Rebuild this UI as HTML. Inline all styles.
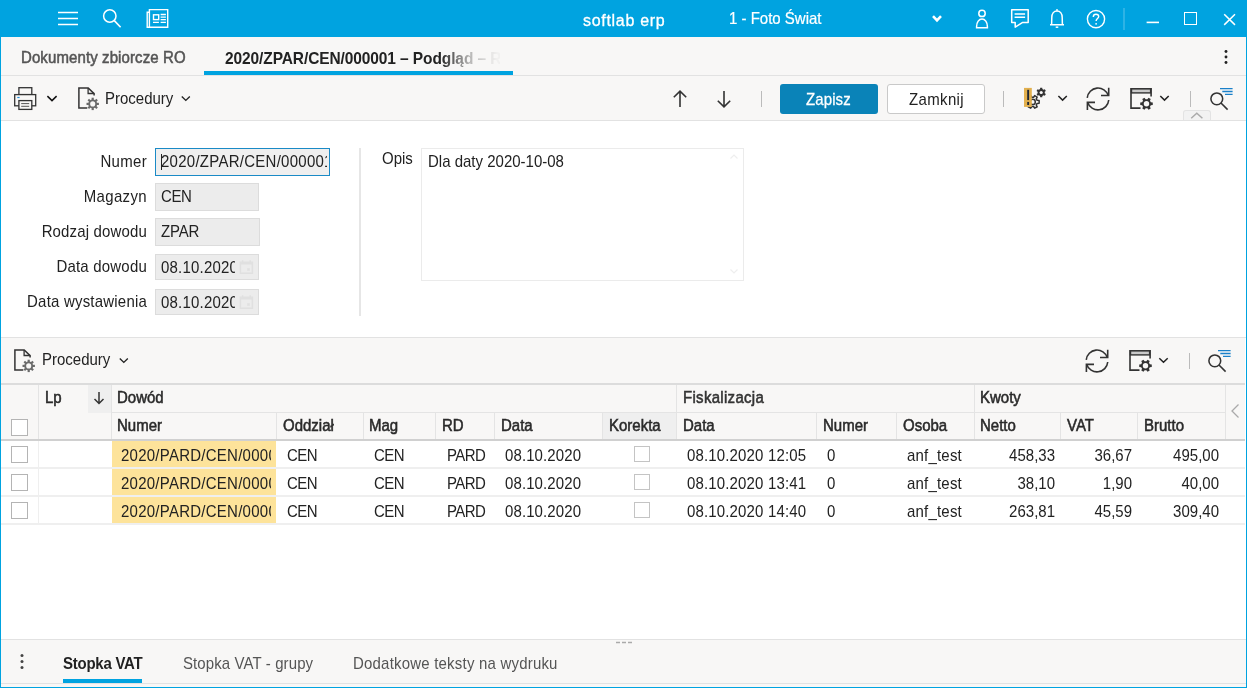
<!DOCTYPE html><html><head><meta charset="utf-8"><style>
html,body{margin:0;padding:0;background:#fff;width:1254px;height:688px;overflow:hidden}
body{position:relative;font-family:"Liberation Sans",sans-serif}
.t{position:absolute;white-space:nowrap;line-height:normal;transform:scaleY(1.08);transform-origin:0 14px}
.m{-webkit-text-stroke:0.5px currentColor}
svg{overflow:visible}
</style></head><body><div id="root" style="position:absolute;left:0;top:0;width:1254px;height:688px;background:#fff;will-change:transform"><div style="position:absolute;left:0px;top:0px;width:1247px;height:37px;background:#00a3e0"></div>
<div style="position:absolute;left:0px;top:37px;width:1247px;height:84px;background:#f8f7f6"></div>
<div style="position:absolute;left:0px;top:75px;width:1247px;height:1px;background:#e2e2e2"></div>
<div style="position:absolute;left:0px;top:120px;width:1247px;height:1px;background:#e2e2e2"></div>
<div style="position:absolute;left:0px;top:121px;width:1247px;height:216px;background:#fff"></div>
<div style="position:absolute;left:0px;top:337px;width:1247px;height:1px;background:#e2e2e2"></div>
<div style="position:absolute;left:0px;top:338px;width:1245px;height:45px;background:#f8f7f6"></div>
<div style="position:absolute;left:0px;top:383px;width:1245px;height:2px;background:#dcdcdc"></div>
<div style="position:absolute;left:0px;top:385px;width:1225px;height:54px;background:#f8f7f6"></div>
<div style="position:absolute;left:1225px;top:385px;width:20px;height:54px;background:#f8f7f6"></div>
<div style="position:absolute;left:0px;top:439px;width:1245px;height:2px;background:#d0d0d0"></div>
<div style="position:absolute;left:0px;top:441px;width:1247px;height:198px;background:#fff"></div>
<div style="position:absolute;left:0px;top:639px;width:1247px;height:1px;background:#e2e2e2"></div>
<div style="position:absolute;left:0px;top:640px;width:1247px;height:47px;background:#f8f7f6"></div>
<div style="position:absolute;left:0px;top:683px;width:1247px;height:1px;background:#e2e2e2"></div>
<svg style="position:absolute;left:58px;top:11px;" width="20" height="15" viewBox="0 0 20 15"><path d="M0 1.5H20M0 7.5H20M0 13.5H20" stroke="#fff" stroke-width="1.6"/></svg>
<svg style="position:absolute;left:100px;top:6px;" width="24" height="24" viewBox="0 0 24 24"><circle cx="9.8" cy="10" r="6.2" fill="none" stroke="#fff" stroke-width="1.5"/><path d="M14.3 14.6L20.6 21.3" stroke="#fff" stroke-width="1.6"/></svg>
<svg style="position:absolute;left:146px;top:8px;" width="24" height="21" viewBox="0 0 24 21"><path d="M3.4 4.2H1.2V19.3H21.7V1.6H3.4V19.3" fill="none" stroke="#fff" stroke-width="1.4"/><rect x="7.5" y="6.8" width="5.2" height="4.8" fill="none" stroke="#fff" stroke-width="1.4"/><path d="M14.6 6.5H19.9M14.6 9.1H19.9M14.6 11.6H19.9M7 14.4H12.9M14.6 14.4H19.9" stroke="#fff" stroke-width="1.3"/></svg>
<div class="t" style="left:583px;top:12px;font-size:16px;font-weight:400;color:#fff;letter-spacing:0.7px;-webkit-text-stroke:0.3px #fff">softlab erp</div>
<div class="t" style="left:729px;top:10px;font-size:15px;font-weight:400;color:#fff;-webkit-text-stroke:0.2px #fff">1 - Foto Świat</div>
<svg style="position:absolute;left:930px;top:12px;" width="14" height="12" viewBox="0 0 14 12"><path d="M3 4.2L7 8.3L11 4.2" fill="none" stroke="#fff" stroke-width="2.6"/></svg>
<svg style="position:absolute;left:972px;top:8px;" width="20" height="22" viewBox="0 0 20 22"><circle cx="10" cy="5.4" r="3.2" fill="none" stroke="#fff" stroke-width="1.5"/><path d="M4.6 19.7V18.5C4.6 14.2 7 11 10 11C13 11 15.4 14.2 15.4 18.5V19.7Z" fill="none" stroke="#fff" stroke-width="1.5"/></svg>
<svg style="position:absolute;left:1008px;top:7px;" width="24" height="22" viewBox="0 0 24 22"><path d="M3.7 2.8H20.2V15.6H14.3L7.2 20.2V15.6H3.7Z" fill="none" stroke="#fff" stroke-width="1.5" stroke-linejoin="round"/><path d="M6.6 7H17.1M6.6 10.2H17.1" stroke="#fff" stroke-width="1.5"/></svg>
<svg style="position:absolute;left:1047px;top:7px;" width="22" height="23" viewBox="0 0 22 23"><path d="M4.6 17.8L4.8 10.6C4.8 6.7 7 4 10 4C13 4 15.2 6.7 15.2 10.6L15.4 17.8M3 17.8H17" fill="none" stroke="#fff" stroke-width="1.5"/><circle cx="10" cy="2.9" r="0.9" fill="#fff"/><path d="M8.7 20.2H11.3" stroke="#fff" stroke-width="1.5"/></svg>
<svg style="position:absolute;left:1084px;top:7px;" width="24" height="24" viewBox="0 0 24 24"><circle cx="12" cy="12.1" r="8.6" fill="none" stroke="#fff" stroke-width="1.4"/><path d="M9.3 9.9C9.3 8.2 10.5 7.2 12 7.2C13.5 7.2 14.7 8.2 14.7 9.6C14.7 11.4 12.1 11.9 12.1 14.1" fill="none" stroke="#fff" stroke-width="1.4"/><circle cx="12.1" cy="16.8" r="0.9" fill="#fff"/></svg>
<div style="position:absolute;left:1123px;top:8px;width:2px;height:22px;background:rgba(255,255,255,0.18)"></div>
<svg style="position:absolute;left:1146px;top:20px;" width="14" height="5" viewBox="0 0 14 5"><path d="M0.6 2.4H13" stroke="#fff" stroke-width="1.6"/></svg>
<div style="position:absolute;left:1184px;top:12px;width:13px;height:13px;box-sizing:border-box;border:1.6px solid #fff"></div>
<svg style="position:absolute;left:1222px;top:12px;" width="15" height="15" viewBox="0 0 15 15"><path d="M2.2 2.3L13 12.9M13 2.3L2.2 12.9" stroke="#fff" stroke-width="1.5"/></svg>
<div class="t" style="left:21px;top:49px;font-size:15px;font-weight:400;color:#555;letter-spacing:0.1px"><span class="m">Dokumenty zbiorcze RO</span></div>
<div class="t" style="left:225px;top:50px;font-size:15.5px;font-weight:700;letter-spacing:-0.1px;color:#222;width:275px;overflow:hidden;-webkit-mask-image:linear-gradient(90deg,#000 0,#000 215px,rgba(0,0,0,0.3) 245px,rgba(0,0,0,0.03) 272px)">2020/ZPAR/CEN/000001 – Podgląd – Rozliczenie</div>
<div style="position:absolute;left:204px;top:71px;width:309px;height:4px;background:#00a3e0"></div>
<svg style="position:absolute;left:1222px;top:48px;" width="8" height="20" viewBox="0 0 8 20"><circle cx="4" cy="3.5" r="1.45" fill="#222"/><circle cx="4" cy="9" r="1.45" fill="#222"/><circle cx="4" cy="14.5" r="1.45" fill="#222"/></svg>
<svg style="position:absolute;left:12px;top:85px;" width="26" height="27" viewBox="0 0 26 27"><rect x="6.9" y="2.7" width="12.9" height="6.9" fill="none" stroke="#333" stroke-width="1.3"/><rect x="2.7" y="9.6" width="21" height="11.2" fill="#f8f7f6" stroke="#333" stroke-width="1.3"/><rect x="6.9" y="15.6" width="12.9" height="8.8" fill="#f8f7f6" stroke="#333" stroke-width="1.3"/><path d="M9.2 18.6H17.2M9.2 21.3H17.2" stroke="#555" stroke-width="1"/><path d="M5.3 12.5H7.6" stroke="#1e8ad6" stroke-width="1.2"/></svg>
<svg style="position:absolute;left:44px;top:92px;" width="16" height="12" viewBox="0 0 16 12"><path d="M3.4 4.1L8 8.6L12.6 4.1" fill="none" stroke="#111" stroke-width="1.5"/></svg>
<svg style="position:absolute;left:77px;top:85px;" width="24" height="26" viewBox="0 0 24 26"><path d="M10.3 23H1.9V2.9H11.2L17.1 8.6V10.6" fill="none" stroke="#333" stroke-width="1.5"/><path d="M11.1 2.9V8.5H17.1" fill="none" stroke="#333" stroke-width="1.3"/><g transform="translate(15.7 18.9)"><circle r="3.5" fill="none" stroke="#6a6a6a" stroke-width="1.9"/><rect x="-1.1" y="-6.2" width="2.2" height="2.4" fill="#6a6a6a" transform="rotate(0)"/><rect x="-1.1" y="-6.2" width="2.2" height="2.4" fill="#6a6a6a" transform="rotate(45)"/><rect x="-1.1" y="-6.2" width="2.2" height="2.4" fill="#6a6a6a" transform="rotate(90)"/><rect x="-1.1" y="-6.2" width="2.2" height="2.4" fill="#6a6a6a" transform="rotate(135)"/><rect x="-1.1" y="-6.2" width="2.2" height="2.4" fill="#6a6a6a" transform="rotate(180)"/><rect x="-1.1" y="-6.2" width="2.2" height="2.4" fill="#6a6a6a" transform="rotate(225)"/><rect x="-1.1" y="-6.2" width="2.2" height="2.4" fill="#6a6a6a" transform="rotate(270)"/><rect x="-1.1" y="-6.2" width="2.2" height="2.4" fill="#6a6a6a" transform="rotate(315)"/></g></svg>
<div class="t" style="left:105px;top:90px;font-size:15px;font-weight:400;color:#222;">Procedury</div>
<svg style="position:absolute;left:178px;top:92px;" width="14" height="12" viewBox="0 0 14 12"><path d="M3.8 4.6L7.8 8.4L11.8 4.6" fill="none" stroke="#222" stroke-width="1.4"/></svg>
<svg style="position:absolute;left:670px;top:88px;" width="20" height="22" viewBox="0 0 20 22"><path d="M10 3.2V19M3.8 9.3L10 3.1L16.2 9.3" fill="none" stroke="#333" stroke-width="1.6"/></svg>
<svg style="position:absolute;left:714px;top:88px;" width="20" height="22" viewBox="0 0 20 22"><path d="M10 3V18.8M3.8 12.7L10 18.9L16.2 12.7" fill="none" stroke="#333" stroke-width="1.6"/></svg>
<div style="position:absolute;left:761px;top:91px;width:1px;height:16px;background:#bbb"></div>
<div style="position:absolute;left:780px;top:84px;width:98px;height:30px;background:#0a83b8;border-radius:3px"></div>
<div class="t" style="left:806px;top:91px;font-size:15px;font-weight:400;color:#fff;-webkit-text-stroke:0.25px #fff;letter-spacing:0.1px">Zapisz</div>
<div style="position:absolute;left:887px;top:84px;width:98px;height:30px;box-sizing:border-box;background:#fff;border:1px solid #c9c9c9;border-radius:3px"></div>
<div class="t" style="left:909px;top:91px;font-size:15px;font-weight:400;color:#222;letter-spacing:0.35px">Zamknij</div>
<div style="position:absolute;left:1003px;top:91px;width:1px;height:16px;background:#bbb"></div>
<svg style="position:absolute;left:1022px;top:86px;" width="28" height="26" viewBox="0 0 28 26"><path d="M11.58 11.28 L12.67 9.60 L15.17 11.04 L14.26 12.83 L15.14 14.35 L17.14 14.46 L17.14 17.34 L15.14 17.45 L14.26 18.97 L15.17 20.76 L12.67 22.20 L11.58 20.52 L9.82 20.52 L8.73 22.20 L6.23 20.76 L7.14 18.97 L6.26 17.45 L4.26 17.34 L4.26 14.46 L6.26 14.35 L7.14 12.83 L6.23 11.04 L8.73 9.60 L9.82 11.28Z" fill="#f8f7f6" stroke="#333" stroke-width="1.5" stroke-linejoin="round"/><circle cx="10.7" cy="15.9" r="2.6" fill="none" stroke="#333" stroke-width="1.5"/><rect x="2" y="1.9" width="7.8" height="19" fill="#e2b04e"/><rect x="5.2" y="3.8" width="1.9" height="10.3" fill="#1e2633"/><rect x="5.2" y="15.9" width="1.9" height="3.1" fill="#1e2633"/><path d="M18.02 3.10 L18.18 1.71 L20.22 1.71 L20.38 3.10 L21.55 3.77 L22.84 3.22 L23.86 4.99 L22.74 5.83 L22.74 7.17 L23.86 8.01 L22.84 9.78 L21.55 9.23 L20.38 9.90 L20.22 11.29 L18.18 11.29 L18.02 9.90 L16.85 9.23 L15.56 9.78 L14.54 8.01 L15.66 7.17 L15.66 5.83 L14.54 4.99 L15.56 3.22 L16.85 3.77Z" fill="#333"/><circle cx="19.2" cy="6.5" r="1.6" fill="#f8f7f6"/></svg>
<svg style="position:absolute;left:1054px;top:92px;" width="16" height="12" viewBox="0 0 16 12"><path d="M4.4 4L8.6 8.1L12.8 4" fill="none" stroke="#222" stroke-width="1.5"/></svg>
<svg style="position:absolute;left:1085px;top:86px;" width="26" height="26" viewBox="0 0 26 26"><path d="M2.26 11.8A10.8 10.8 0 0 1 23.3 9.6M23.74 14A10.8 10.8 0 0 1 2.7 16.4" fill="none" stroke="#333" stroke-width="1.6"/><path d="M23.7 1.8V9.5H16M2.4 24V16.4H10" fill="none" stroke="#333" stroke-width="1.6"/></svg>
<svg style="position:absolute;left:1130px;top:86px;" width="28" height="26" viewBox="0 0 28 26"><path d="M10.5 22.1H1V2.9H21.1V10.6" fill="none" stroke="#333" stroke-width="1.6"/><rect x="1.5" y="2.9" width="19.1" height="4" fill="#c9c9c9" stroke="#333" stroke-width="1.4"/><path d="M17.36 13.28 L18.54 11.73 L20.73 13.00 L19.98 14.79 L20.84 16.29 L22.77 16.53 L22.77 19.07 L20.84 19.31 L19.98 20.81 L20.73 22.60 L18.54 23.87 L17.36 22.32 L15.64 22.32 L14.46 23.87 L12.27 22.60 L13.02 20.81 L12.16 19.31 L10.23 19.07 L10.23 16.53 L12.16 16.29 L13.02 14.79 L12.27 13.00 L14.46 11.73 L15.64 13.28Z" fill="#333"/><circle cx="16.5" cy="17.8" r="2.7" fill="#f8f7f6"/></svg>
<svg style="position:absolute;left:1156px;top:92px;" width="16" height="12" viewBox="0 0 16 12"><path d="M4.3 4L8.5 8.1L12.7 4" fill="none" stroke="#222" stroke-width="1.5"/></svg>
<div style="position:absolute;left:1190px;top:91px;width:1px;height:16px;background:#bbb"></div>
<svg style="position:absolute;left:1208px;top:86px;" width="26" height="26" viewBox="0 0 26 26"><circle cx="8.8" cy="12.8" r="5.9" fill="none" stroke="#333" stroke-width="1.55"/><path d="M13 17L19.6 23.6" stroke="#333" stroke-width="1.6"/><path d="M12 2.7H24.6M14.3 5.5H24.6M17 8.3H24.6" stroke="#1a80c9" stroke-width="1.3"/></svg>
<div style="position:absolute;left:1183px;top:110px;width:28px;height:10px;background:#f2f2f2;border:1px solid #e3e3e3;border-bottom:none;border-radius:3px 3px 0 0;box-sizing:border-box"></div>
<svg style="position:absolute;left:1188px;top:110px;" width="17" height="10" viewBox="0 0 17 10"><path d="M3.2 8.2L8.8 3.3L14.4 8.2" fill="none" stroke="#aaa" stroke-width="1.5"/></svg>
<div class="t" style="right:1107px;top:153px;font-size:15px;letter-spacing:0.3px;color:#222">Numer</div>
<div class="t" style="right:1107px;top:188px;font-size:15px;letter-spacing:0.35px;color:#222">Magazyn</div>
<div class="t" style="right:1107px;top:223px;font-size:15px;letter-spacing:0.15px;color:#222">Rodzaj dowodu</div>
<div class="t" style="right:1107px;top:258px;font-size:15px;letter-spacing:0.2px;color:#222">Data dowodu</div>
<div class="t" style="right:1107px;top:293px;font-size:15px;letter-spacing:0.2px;color:#222">Data wystawienia</div>
<div style="position:absolute;left:155px;top:148px;width:175px;height:28px;box-sizing:border-box;background:#efefef;border:1.5px solid #1a8ac6"></div>
<div class="t" style="left:161px;top:153px;width:166px;overflow:hidden;font-size:15px;letter-spacing:0.26px;color:#222">2020/ZPAR/CEN/000001</div>
<div style="position:absolute;left:161px;top:154px;width:1px;height:16px;background:#222"></div>
<div style="position:absolute;left:155px;top:183px;width:104px;height:28px;box-sizing:border-box;background:#ececec;border:1px solid #dcdcdc"></div>
<div class="t" style="left:161px;top:188px;font-size:15px;font-weight:400;color:#222;letter-spacing:-0.4px">CEN</div>
<div style="position:absolute;left:155px;top:218px;width:105px;height:28px;box-sizing:border-box;background:#ececec;border:1px solid #dcdcdc"></div>
<div class="t" style="left:161px;top:223px;font-size:15px;font-weight:400;color:#222;letter-spacing:-0.2px">ZPAR</div>
<div style="position:absolute;left:155px;top:254px;width:104px;height:26px;box-sizing:border-box;background:#ececec;border:1px solid #dcdcdc"></div>
<div class="t" style="left:161px;top:259px;width:74px;overflow:hidden;font-size:15px;letter-spacing:0.2px;color:#222">08.10.2020</div>
<div style="position:absolute;left:235px;top:255px;width:23px;height:24px;background:#ececec"></div>
<svg style="position:absolute;left:239px;top:259px;" width="15" height="15" viewBox="0 0 15 15"><rect x="1.4" y="3.2" width="12" height="11" fill="none" stroke="#e0e0e0" stroke-width="1.5"/><path d="M1.4 4.8H13.4M3.6 1.2V3.2M11.2 1.2V3.2" stroke="#e0e0e0" stroke-width="1.5"/><rect x="8.2" y="9.2" width="2.6" height="2.6" fill="#e0e0e0"/></svg>
<div style="position:absolute;left:155px;top:289px;width:104px;height:26px;box-sizing:border-box;background:#ececec;border:1px solid #dcdcdc"></div>
<div class="t" style="left:161px;top:294px;width:74px;overflow:hidden;font-size:15px;letter-spacing:0.2px;color:#222">08.10.2020</div>
<div style="position:absolute;left:235px;top:290px;width:23px;height:24px;background:#ececec"></div>
<svg style="position:absolute;left:239px;top:294px;" width="15" height="15" viewBox="0 0 15 15"><rect x="1.4" y="3.2" width="12" height="11" fill="none" stroke="#e0e0e0" stroke-width="1.5"/><path d="M1.4 4.8H13.4M3.6 1.2V3.2M11.2 1.2V3.2" stroke="#e0e0e0" stroke-width="1.5"/><rect x="8.2" y="9.2" width="2.6" height="2.6" fill="#e0e0e0"/></svg>
<div style="position:absolute;left:359px;top:148px;width:2px;height:168px;background:#e6e6e6"></div>
<div class="t" style="left:382px;top:150px;font-size:15px;font-weight:400;color:#222;">Opis</div>
<div style="position:absolute;left:421px;top:148px;width:323px;height:133px;box-sizing:border-box;background:#fff;border:1px solid #ebebeb"></div>
<div class="t" style="left:428px;top:153px;font-size:15px;font-weight:400;color:#222;">Dla daty 2020-10-08</div>
<svg style="position:absolute;left:728px;top:152px;" width="12" height="10" viewBox="0 0 12 10"><path d="M2.5 6.5L6 3L9.5 6.5" fill="none" stroke="#eee" stroke-width="1.2"/></svg>
<svg style="position:absolute;left:728px;top:266px;" width="12" height="10" viewBox="0 0 12 10"><path d="M2.5 3.5L6 7L9.5 3.5" fill="none" stroke="#eee" stroke-width="1.2"/></svg>
<svg style="position:absolute;left:13px;top:347px;" width="24" height="26" viewBox="0 0 24 26"><path d="M10.3 23H1.9V2.9H11.2L17.1 8.6V10.6" fill="none" stroke="#333" stroke-width="1.5"/><path d="M11.1 2.9V8.5H17.1" fill="none" stroke="#333" stroke-width="1.3"/><g transform="translate(15.7 18.9)"><circle r="3.5" fill="none" stroke="#6a6a6a" stroke-width="1.9"/><rect x="-1.1" y="-6.2" width="2.2" height="2.4" fill="#6a6a6a" transform="rotate(0)"/><rect x="-1.1" y="-6.2" width="2.2" height="2.4" fill="#6a6a6a" transform="rotate(45)"/><rect x="-1.1" y="-6.2" width="2.2" height="2.4" fill="#6a6a6a" transform="rotate(90)"/><rect x="-1.1" y="-6.2" width="2.2" height="2.4" fill="#6a6a6a" transform="rotate(135)"/><rect x="-1.1" y="-6.2" width="2.2" height="2.4" fill="#6a6a6a" transform="rotate(180)"/><rect x="-1.1" y="-6.2" width="2.2" height="2.4" fill="#6a6a6a" transform="rotate(225)"/><rect x="-1.1" y="-6.2" width="2.2" height="2.4" fill="#6a6a6a" transform="rotate(270)"/><rect x="-1.1" y="-6.2" width="2.2" height="2.4" fill="#6a6a6a" transform="rotate(315)"/></g></svg>
<div class="t" style="left:42px;top:351px;font-size:15px;font-weight:400;color:#222;">Procedury</div>
<svg style="position:absolute;left:116px;top:354px;" width="14" height="12" viewBox="0 0 14 12"><path d="M3.8 4.6L7.8 8.4L11.8 4.6" fill="none" stroke="#222" stroke-width="1.4"/></svg>
<svg style="position:absolute;left:1084px;top:348px;" width="26" height="26" viewBox="0 0 26 26"><path d="M2.26 11.8A10.8 10.8 0 0 1 23.3 9.6M23.74 14A10.8 10.8 0 0 1 2.7 16.4" fill="none" stroke="#333" stroke-width="1.6"/><path d="M23.7 1.8V9.5H16M2.4 24V16.4H10" fill="none" stroke="#333" stroke-width="1.6"/></svg>
<svg style="position:absolute;left:1129px;top:348px;" width="28" height="26" viewBox="0 0 28 26"><path d="M10.5 22.1H1V2.9H21.1V10.6" fill="none" stroke="#333" stroke-width="1.6"/><rect x="1.5" y="2.9" width="19.1" height="4" fill="#c9c9c9" stroke="#333" stroke-width="1.4"/><path d="M17.36 13.28 L18.54 11.73 L20.73 13.00 L19.98 14.79 L20.84 16.29 L22.77 16.53 L22.77 19.07 L20.84 19.31 L19.98 20.81 L20.73 22.60 L18.54 23.87 L17.36 22.32 L15.64 22.32 L14.46 23.87 L12.27 22.60 L13.02 20.81 L12.16 19.31 L10.23 19.07 L10.23 16.53 L12.16 16.29 L13.02 14.79 L12.27 13.00 L14.46 11.73 L15.64 13.28Z" fill="#333"/><circle cx="16.5" cy="17.8" r="2.7" fill="#f8f7f6"/></svg>
<svg style="position:absolute;left:1155px;top:354px;" width="16" height="12" viewBox="0 0 16 12"><path d="M4.3 4.2L8.5 8.3L12.7 4.2" fill="none" stroke="#222" stroke-width="1.5"/></svg>
<div style="position:absolute;left:1189px;top:353px;width:1px;height:16px;background:#bbb"></div>
<svg style="position:absolute;left:1206px;top:348px;" width="26" height="26" viewBox="0 0 26 26"><circle cx="8.8" cy="12.8" r="5.9" fill="none" stroke="#333" stroke-width="1.55"/><path d="M13 17L19.6 23.6" stroke="#333" stroke-width="1.6"/><path d="M12 2.7H24.6M14.3 5.5H24.6M17 8.3H24.6" stroke="#1a80c9" stroke-width="1.3"/></svg>
<div style="position:absolute;left:88px;top:385px;width:23px;height:28px;background:#efefef"></div>
<div style="position:absolute;left:602px;top:413px;width:74px;height:26px;background:#efefef"></div>
<div style="position:absolute;left:38px;top:385px;width:1px;height:54px;background:#e4e4e4"></div>
<div style="position:absolute;left:111px;top:385px;width:1px;height:54px;background:#e4e4e4"></div>
<div style="position:absolute;left:676px;top:385px;width:1px;height:54px;background:#e4e4e4"></div>
<div style="position:absolute;left:974px;top:385px;width:1px;height:54px;background:#e4e4e4"></div>
<div style="position:absolute;left:276px;top:413px;width:1px;height:26px;background:#e4e4e4"></div>
<div style="position:absolute;left:363px;top:413px;width:1px;height:26px;background:#e4e4e4"></div>
<div style="position:absolute;left:435px;top:413px;width:1px;height:26px;background:#e4e4e4"></div>
<div style="position:absolute;left:494px;top:413px;width:1px;height:26px;background:#e4e4e4"></div>
<div style="position:absolute;left:602px;top:413px;width:1px;height:26px;background:#e4e4e4"></div>
<div style="position:absolute;left:816px;top:413px;width:1px;height:26px;background:#e4e4e4"></div>
<div style="position:absolute;left:896px;top:413px;width:1px;height:26px;background:#e4e4e4"></div>
<div style="position:absolute;left:1060px;top:413px;width:1px;height:26px;background:#e4e4e4"></div>
<div style="position:absolute;left:1137px;top:413px;width:1px;height:26px;background:#e4e4e4"></div>
<div style="position:absolute;left:1225px;top:385px;width:1px;height:54px;background:#e4e4e4"></div>
<div style="position:absolute;left:111px;top:412px;width:1114px;height:1px;background:#e4e4e4"></div>
<div class="t" style="left:45px;top:389px;font-size:15px;font-weight:400;color:#2a2a2a;"><span class="m">Lp</span></div>
<svg style="position:absolute;left:90px;top:389px;" width="18" height="18" viewBox="0 0 18 18"><path d="M9 3V14.5M4.5 10L9 14.5L13.5 10" fill="none" stroke="#333" stroke-width="1.5"/></svg>
<div class="t" style="left:117px;top:389px;font-size:15px;font-weight:400;color:#2a2a2a;"><span class="m">Dowód</span></div>
<div class="t" style="left:683px;top:389px;font-size:15px;font-weight:400;color:#333;letter-spacing:0.3px"><span class="m">Fiskalizacja</span></div>
<div class="t" style="left:980px;top:389px;font-size:15px;font-weight:400;color:#2a2a2a;"><span class="m">Kwoty</span></div>
<div class="t" style="left:117px;top:417px;font-size:15px;font-weight:400;color:#2a2a2a;"><span class="m">Numer</span></div>
<div class="t" style="left:283px;top:417px;font-size:15px;font-weight:400;color:#2a2a2a;"><span class="m">Oddział</span></div>
<div class="t" style="left:369px;top:417px;font-size:15px;font-weight:400;color:#2a2a2a;"><span class="m">Mag</span></div>
<div class="t" style="left:442px;top:417px;font-size:15px;font-weight:400;color:#2a2a2a;"><span class="m">RD</span></div>
<div class="t" style="left:501px;top:417px;font-size:15px;font-weight:400;color:#2a2a2a;"><span class="m">Data</span></div>
<div class="t" style="left:609px;top:417px;font-size:15px;font-weight:400;color:#2a2a2a;"><span class="m">Korekta</span></div>
<div class="t" style="left:683px;top:417px;font-size:15px;font-weight:400;color:#2a2a2a;"><span class="m">Data</span></div>
<div class="t" style="left:823px;top:417px;font-size:15px;font-weight:400;color:#2a2a2a;"><span class="m">Numer</span></div>
<div class="t" style="left:903px;top:417px;font-size:15px;font-weight:400;color:#2a2a2a;"><span class="m">Osoba</span></div>
<div class="t" style="left:980px;top:417px;font-size:15px;font-weight:400;color:#2a2a2a;"><span class="m">Netto</span></div>
<div class="t" style="left:1067px;top:417px;font-size:15px;font-weight:400;color:#2a2a2a;"><span class="m">VAT</span></div>
<div class="t" style="left:1144px;top:417px;font-size:15px;font-weight:400;color:#2a2a2a;"><span class="m">Brutto</span></div>
<svg style="position:absolute;left:1229px;top:402px;" width="12" height="18" viewBox="0 0 12 18"><path d="M9.5 2.5L3 9L9.5 15.5" fill="none" stroke="#aaa" stroke-width="1.3"/></svg>
<div style="position:absolute;left:11px;top:419px;width:17px;height:17px;box-sizing:border-box;background:#fff;border:1.5px solid #b4b4b4"></div>
<div style="position:absolute;left:112px;top:441px;width:164px;height:26px;background:#fde39a"></div>
<div style="position:absolute;left:0px;top:467px;width:1245px;height:2px;background:#efefef"></div>
<div style="position:absolute;left:11px;top:446px;width:17px;height:17px;box-sizing:border-box;background:#fff;border:1.5px solid #b4b4b4"></div>
<div class="t" style="left:121px;top:447px;width:150px;overflow:hidden;font-size:15px;letter-spacing:0.25px;color:#222">2020/PARD/CEN/000001</div>
<div class="t" style="left:287px;top:447px;font-size:15px;font-weight:400;color:#222;letter-spacing:-0.5px">CEN</div>
<div class="t" style="left:374px;top:447px;font-size:15px;font-weight:400;color:#222;letter-spacing:-0.5px">CEN</div>
<div class="t" style="left:447px;top:447px;font-size:15px;font-weight:400;color:#222;letter-spacing:-0.6px">PARD</div>
<div class="t" style="left:505px;top:447px;font-size:15px;font-weight:400;color:#222;letter-spacing:0.1px">08.10.2020</div>
<div style="position:absolute;left:634px;top:446px;width:16px;height:16px;box-sizing:border-box;background:#fff;border:1.5px solid #c4c4c4"></div>
<div class="t" style="left:687px;top:447px;font-size:15px;font-weight:400;color:#222;letter-spacing:0.15px">08.10.2020 12:05</div>
<div class="t" style="left:827px;top:447px;font-size:15px;font-weight:400;color:#222;">0</div>
<div class="t" style="left:907px;top:447px;font-size:15px;font-weight:400;color:#222;letter-spacing:0.2px">anf_test</div>
<div class="t" style="right:199px;top:447px;font-size:15px;color:#222">458,33</div>
<div class="t" style="right:122px;top:447px;font-size:15px;color:#222">36,67</div>
<div class="t" style="right:35px;top:447px;font-size:15px;color:#222">495,00</div>
<div style="position:absolute;left:112px;top:469px;width:164px;height:26px;background:#fde39a"></div>
<div style="position:absolute;left:0px;top:495px;width:1245px;height:2px;background:#efefef"></div>
<div style="position:absolute;left:11px;top:474px;width:17px;height:17px;box-sizing:border-box;background:#fff;border:1.5px solid #b4b4b4"></div>
<div class="t" style="left:121px;top:475px;width:150px;overflow:hidden;font-size:15px;letter-spacing:0.25px;color:#222">2020/PARD/CEN/000001</div>
<div class="t" style="left:287px;top:475px;font-size:15px;font-weight:400;color:#222;letter-spacing:-0.5px">CEN</div>
<div class="t" style="left:374px;top:475px;font-size:15px;font-weight:400;color:#222;letter-spacing:-0.5px">CEN</div>
<div class="t" style="left:447px;top:475px;font-size:15px;font-weight:400;color:#222;letter-spacing:-0.6px">PARD</div>
<div class="t" style="left:505px;top:475px;font-size:15px;font-weight:400;color:#222;letter-spacing:0.1px">08.10.2020</div>
<div style="position:absolute;left:634px;top:474px;width:16px;height:16px;box-sizing:border-box;background:#fff;border:1.5px solid #c4c4c4"></div>
<div class="t" style="left:687px;top:475px;font-size:15px;font-weight:400;color:#222;letter-spacing:0.15px">08.10.2020 13:41</div>
<div class="t" style="left:827px;top:475px;font-size:15px;font-weight:400;color:#222;">0</div>
<div class="t" style="left:907px;top:475px;font-size:15px;font-weight:400;color:#222;letter-spacing:0.2px">anf_test</div>
<div class="t" style="right:199px;top:475px;font-size:15px;color:#222">38,10</div>
<div class="t" style="right:122px;top:475px;font-size:15px;color:#222">1,90</div>
<div class="t" style="right:35px;top:475px;font-size:15px;color:#222">40,00</div>
<div style="position:absolute;left:112px;top:497px;width:164px;height:26px;background:#fde39a"></div>
<div style="position:absolute;left:0px;top:523px;width:1245px;height:2px;background:#efefef"></div>
<div style="position:absolute;left:11px;top:502px;width:17px;height:17px;box-sizing:border-box;background:#fff;border:1.5px solid #b4b4b4"></div>
<div class="t" style="left:121px;top:503px;width:150px;overflow:hidden;font-size:15px;letter-spacing:0.25px;color:#222">2020/PARD/CEN/000001</div>
<div class="t" style="left:287px;top:503px;font-size:15px;font-weight:400;color:#222;letter-spacing:-0.5px">CEN</div>
<div class="t" style="left:374px;top:503px;font-size:15px;font-weight:400;color:#222;letter-spacing:-0.5px">CEN</div>
<div class="t" style="left:447px;top:503px;font-size:15px;font-weight:400;color:#222;letter-spacing:-0.6px">PARD</div>
<div class="t" style="left:505px;top:503px;font-size:15px;font-weight:400;color:#222;letter-spacing:0.1px">08.10.2020</div>
<div style="position:absolute;left:634px;top:502px;width:16px;height:16px;box-sizing:border-box;background:#fff;border:1.5px solid #c4c4c4"></div>
<div class="t" style="left:687px;top:503px;font-size:15px;font-weight:400;color:#222;letter-spacing:0.15px">08.10.2020 14:40</div>
<div class="t" style="left:827px;top:503px;font-size:15px;font-weight:400;color:#222;">0</div>
<div class="t" style="left:907px;top:503px;font-size:15px;font-weight:400;color:#222;letter-spacing:0.2px">anf_test</div>
<div class="t" style="right:199px;top:503px;font-size:15px;color:#222">263,81</div>
<div class="t" style="right:122px;top:503px;font-size:15px;color:#222">45,59</div>
<div class="t" style="right:35px;top:503px;font-size:15px;color:#222">309,40</div>
<div style="position:absolute;left:38px;top:441px;width:1px;height:83px;background:#efefef"></div>
<svg style="position:absolute;left:16px;top:650px;" width="12" height="22" viewBox="0 0 12 22"><circle cx="6" cy="5.5" r="1.5" fill="#444"/><circle cx="6" cy="11.5" r="1.5" fill="#444"/><circle cx="6" cy="17.5" r="1.5" fill="#444"/></svg>
<div class="t" style="left:63px;top:655px;font-size:15px;font-weight:700;color:#222;letter-spacing:-0.25px">Stopka VAT</div>
<div style="position:absolute;left:63px;top:679px;width:79px;height:4px;background:#00a3e0"></div>
<div class="t" style="left:183px;top:655px;font-size:15px;font-weight:400;color:#555;letter-spacing:0.1px">Stopka VAT - grupy</div>
<div class="t" style="left:353px;top:655px;font-size:15px;font-weight:400;color:#555;letter-spacing:0.2px">Dodatkowe teksty na wydruku</div>
<svg style="position:absolute;left:614px;top:639px;" width="20" height="6" viewBox="0 0 20 6"><path d="M2 3.5H6M8 3.5H12M14 3.5H18" stroke="#aaa" stroke-width="1.3"/></svg>
<div style="position:absolute;left:0px;top:37px;width:1px;height:651px;background:#00a3e0"></div>
<div style="position:absolute;left:1246px;top:37px;width:1px;height:651px;background:#00a3e0"></div>
<div style="position:absolute;left:0px;top:687px;width:1247px;height:1px;background:#00a3e0"></div></div></body></html>
